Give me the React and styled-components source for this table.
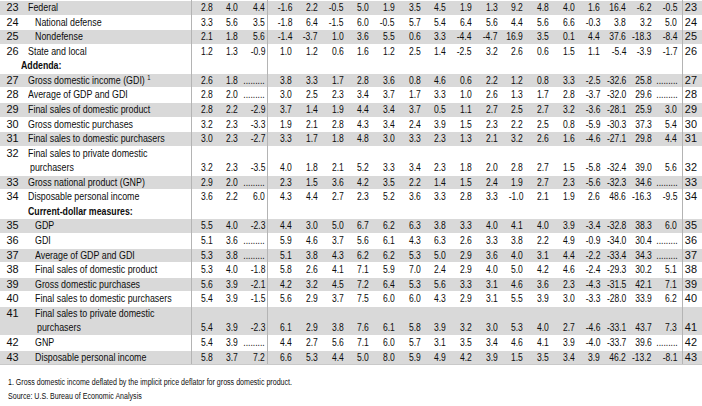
import React from "react";
import styled, { createGlobalStyle } from "styled-components";

// Fonts (no narrow face is installed, so text is squeezed with scaleX)
const SANS = `"Liberation Sans", Arial, sans-serif`;

const ROW_H = 14.57;
const RULE = "#b4b4b4";
const SHADE = "#d9d9d9";
const NARROW = 0.8;

// Column widths, left to right (702 in all)
const COLS = [
	20, 171, 24.3, 25, 26.7, 29.5,
	...Array(15).fill(25.7),
	20,
];

const DOTS = null;

const ROWS = [
	{ n: 23, label: "Federal", level: 1, vals: [2.8, 4.0, 4.4, -1.6, 2.2, -0.5, 5.0, 1.9, 3.5, 4.5, 1.9, 1.3, 9.2, 4.8, 4.0, 1.6, 16.4, -6.2, -0.5] },
	{ n: 24, label: "National defense", level: 2, vals: [3.3, 5.6, 3.5, -1.8, 6.4, -1.5, 6.0, -0.5, 5.7, 5.4, 6.4, 5.6, 4.4, 5.6, 6.6, -0.3, 3.8, 3.2, 5.0] },
	{ n: 25, label: "Nondefense", level: 2, vals: [2.1, 1.8, 5.6, -1.4, -3.7, 1.0, 3.6, 5.5, 0.6, 3.3, -4.4, -4.7, 16.9, 3.5, 0.1, 4.4, 37.6, -18.3, -8.4] },
	{ n: 26, label: "State and local", level: 1, vals: [1.2, 1.3, -0.9, 1.0, 1.2, 0.6, 1.6, 1.2, 2.5, 1.4, -2.5, 3.2, 2.6, 0.6, 1.5, 1.1, -5.4, -3.9, -1.7] },
	{ heading: "Addenda:", level: 0 },
	{ n: 27, label: "Gross domestic income (GDI)", sup: "1", level: 1, vals: [2.6, 1.8, DOTS, 3.8, 3.3, 1.7, 2.8, 3.6, 0.8, 4.6, 0.6, 2.2, 1.2, 0.8, 3.3, -2.5, -32.6, 25.8, DOTS] },
	{ n: 28, label: "Average of GDP and GDI", level: 1, vals: [2.8, 2.0, DOTS, 3.0, 2.5, 2.3, 3.4, 3.7, 1.7, 3.3, 1.0, 2.6, 1.3, 1.7, 2.8, -3.7, -32.0, 29.6, DOTS] },
	{ n: 29, label: "Final sales of domestic product", level: 1, vals: [2.8, 2.2, -2.9, 3.7, 1.4, 1.9, 4.4, 3.4, 3.7, 0.5, 1.1, 2.7, 2.5, 2.7, 3.2, -3.6, -28.1, 25.9, 3.0] },
	{ n: 30, label: "Gross domestic purchases", level: 1, vals: [3.2, 2.3, -3.3, 1.9, 2.1, 2.8, 4.3, 3.4, 2.4, 3.9, 1.5, 2.3, 2.2, 2.5, 0.8, -5.9, -30.3, 37.3, 5.4] },
	{ n: 31, label: "Final sales to domestic purchasers", level: 1, vals: [3.0, 2.3, -2.7, 3.3, 1.7, 1.8, 4.8, 3.0, 3.3, 2.3, 1.3, 2.1, 3.2, 2.6, 1.6, -4.6, -27.1, 29.8, 4.4] },
	{ n: 32, label: "Final sales to private domestic", wrap: "purchasers", level: 1, vals: [3.2, 2.3, -3.5, 4.0, 1.8, 2.1, 5.2, 3.3, 3.4, 2.3, 1.8, 2.0, 2.8, 2.7, 1.5, -5.8, -32.4, 39.0, 5.6] },
	{ n: 33, label: "Gross national product (GNP)", level: 1, vals: [2.9, 2.0, DOTS, 2.3, 1.5, 3.6, 4.2, 3.5, 2.2, 1.4, 1.5, 2.4, 1.9, 2.7, 2.3, -5.6, -32.3, 34.6, DOTS] },
	{ n: 34, label: "Disposable personal income", level: 1, vals: [3.6, 2.2, 6.0, 4.3, 4.4, 2.7, 2.3, 5.2, 3.6, 3.3, 2.8, 3.3, -1.0, 2.1, 1.9, 2.6, 48.6, -16.3, -9.5] },
	{ heading: "Current-dollar measures:", level: 1 },
	{ n: 35, label: "GDP", level: 2, vals: [5.5, 4.0, -2.3, 4.4, 3.0, 5.0, 6.7, 6.2, 6.3, 3.8, 3.3, 4.0, 4.1, 4.0, 3.9, -3.4, -32.8, 38.3, 6.0] },
	{ n: 36, label: "GDI", level: 2, vals: [5.1, 3.6, DOTS, 5.9, 4.6, 3.7, 5.6, 6.1, 4.3, 6.3, 2.6, 3.3, 3.8, 2.2, 4.9, -0.9, -34.0, 30.4, DOTS] },
	{ n: 37, label: "Average of GDP and GDI", level: 2, vals: [5.3, 3.8, DOTS, 5.1, 3.8, 4.3, 6.2, 6.2, 5.3, 5.0, 2.9, 3.6, 4.0, 3.1, 4.4, -2.2, -33.4, 34.3, DOTS] },
	{ n: 38, label: "Final sales of domestic product", level: 2, vals: [5.3, 4.0, -1.8, 5.8, 2.6, 4.1, 7.1, 5.9, 7.0, 2.4, 2.9, 4.0, 5.0, 4.2, 4.6, -2.4, -29.3, 30.2, 5.1] },
	{ n: 39, label: "Gross domestic purchases", level: 2, vals: [5.6, 3.9, -2.1, 4.2, 3.2, 4.5, 7.2, 6.4, 5.3, 5.6, 3.3, 3.1, 4.6, 3.6, 2.3, -4.3, -31.5, 42.1, 7.1] },
	{ n: 40, label: "Final sales to domestic purchasers", level: 2, vals: [5.4, 3.9, -1.5, 5.6, 2.9, 3.7, 7.5, 6.0, 6.0, 4.3, 2.9, 3.1, 5.5, 3.9, 3.0, -3.3, -28.0, 33.9, 6.2] },
	{ n: 41, label: "Final sales to private domestic", wrap: "purchasers", level: 2, vals: [5.4, 3.9, -2.3, 6.1, 2.9, 3.8, 7.6, 6.1, 5.8, 3.9, 3.2, 3.0, 5.3, 4.0, 2.7, -4.6, -33.1, 43.7, 7.3] },
	{ n: 42, label: "GNP", level: 2, vals: [5.4, 3.9, DOTS, 4.4, 2.7, 5.6, 7.1, 6.0, 5.7, 3.1, 3.5, 3.4, 4.6, 4.1, 3.9, -4.0, -33.7, 39.6, DOTS] },
	{ n: 43, label: "Disposable personal income", level: 2, vals: [5.8, 3.7, 7.2, 6.6, 5.3, 4.4, 5.0, 8.0, 5.9, 4.9, 4.2, 3.9, 1.5, 3.5, 3.4, 3.9, 46.2, -13.2, -8.1] },
];

// Helpers
const fmt = v => v.toFixed(1);
const indent = level => [0.5, 7.5, 15][level];

// Styled Components
const GlobalStyle = createGlobalStyle`
	body {
		margin: 0;
		background: #fff;
		color: #0d0d0d;
		font-family: ${SANS};
	}
`;

const Page = styled.div`
	width: 702px;
	height: 406px;
	overflow: hidden;
`;

const Table = styled.table`
	width: 702px;
	table-layout: fixed;
	border-collapse: separate;
	border-spacing: 0;
	border-bottom: 1px solid #c9c9c9;
	font-family: ${SANS};
	font-size: 10.7px;
`;

const Row = styled.tr`
	& > td {
		background: ${props => (props.$shade ? SHADE : "transparent")};
		box-shadow: ${props => (props.$shade ? "inset 0 1px 0 #fff" : "none")};
	}
`;

const Cell = styled.td`
	padding: 0;
	height: ${ROW_H}px;
	line-height: ${ROW_H}px;
	white-space: nowrap;
	overflow: hidden;
`;

const Squeeze = styled.span`
	display: inline-block;
	transform: scaleX(${props => props.$k || NARROW});
	transform-origin: ${props => props.$origin || "left"} center;
`;

const NumCell = styled(Cell)`
	font-size: 10.9px;
	vertical-align: ${props => (props.$right ? "bottom" : "top")};
	text-align: ${props => (props.$right ? "left" : "right")};
	padding: ${props => (props.$right ? "0 0 0 2px" : "0 1.5px 0 0")};
	border-left: ${props => (props.$right ? `1px solid ${RULE}` : "none")};
`;

const LabelCell = styled(Cell)`
	vertical-align: top;
	padding-left: ${props => indent(props.$level)}px;
	font-weight: ${props => (props.$bold ? 700 : 400)};
`;

const LabelLine = styled.div`
	padding-left: ${props => (props.$hang ? 2 : 0)}px;
`;

const Sup = styled.sup`
	font-size: 7px;
	line-height: 0;
	vertical-align: 4px;
	margin-left: 3px;
`;

const DataCell = styled(Cell)`
	vertical-align: bottom;
	padding-right: ${props => (props.$group ? 4.5 : 2)}px;
	border-left: ${props => (props.$rule ? `1px solid ${RULE}` : "none")};
`;

const Figure = styled.div`
	display: flex;
	justify-content: flex-end;
`;

const Notes = styled.div`
	padding: 11px 0 0 8px;
	font-family: ${SANS};
	font-size: 8.4px;
	line-height: 13.5px;
`;

const NoteLine = styled.div`
	transform: scaleX(0.845);
	transform-origin: left center;
	white-space: nowrap;
`;

const DataCells = ({ vals }) =>
	vals.map((v, i) => (
		<DataCell key={i} $group={i >= 3} $rule={i === 0 || i === 3}>
			<Figure>
				<Squeeze $origin="right">{v === null ? "........." : fmt(v)}</Squeeze>
			</Figure>
		</DataCell>
	));

const BlankCells = () =>
	Array.from({ length: 19 }).map((_, i) => (
		<DataCell key={i} $group={i >= 3} $rule={i === 0 || i === 3} />
	));

export default function App() {
	return (
		<Page>
			<GlobalStyle />
			<Table>
				<colgroup>
					{COLS.map((w, i) => (
						<col key={i} style={{ width: w }} />
					))}
				</colgroup>
				<tbody>
					{ROWS.map((row, i) =>
						row.heading ? (
							<Row key={i}>
								<NumCell />
								<LabelCell $level={row.level} $bold>
									<Squeeze $k={0.82}>{row.heading}</Squeeze>
								</LabelCell>
								<BlankCells />
								<NumCell $right />
							</Row>
						) : (
							<Row key={i} $shade={row.n % 2 === 1}>
								<NumCell>{row.n}</NumCell>
								<LabelCell $level={row.level}>
									<LabelLine>
										<Squeeze $k={0.83}>
											{row.label}
											{row.sup && <Sup>{row.sup}</Sup>}
										</Squeeze>
									</LabelLine>
									{row.wrap && (
										<LabelLine $hang>
											<Squeeze $k={0.83}>{row.wrap}</Squeeze>
										</LabelLine>
									)}
								</LabelCell>
								<DataCells vals={row.vals} />
								<NumCell $right>{row.n}</NumCell>
							</Row>
						)
					)}
				</tbody>
			</Table>
			<Notes>
				<NoteLine>1. Gross domestic income deflated by the implicit price deflator for gross domestic product.</NoteLine>
				<NoteLine>Source: U.S. Bureau of Economic Analysis</NoteLine>
			</Notes>
		</Page>
	);
}
